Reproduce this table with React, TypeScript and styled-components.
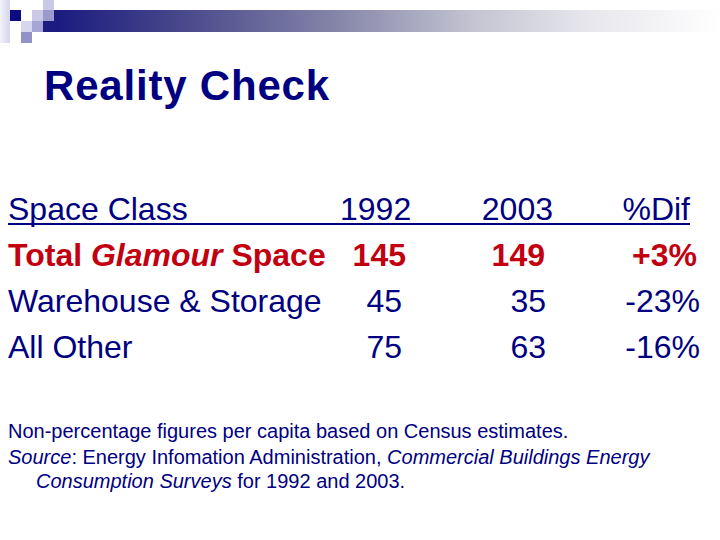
import React from "react";
import styled, { createGlobalStyle } from "styled-components";

const Global = createGlobalStyle`
  html, body { margin: 0; padding: 0; background: #ffffff; }
  body { font-family: "Liberation Sans", Arial, sans-serif; color: #000080; }
`;

const Slide = styled.div`
  width: 720px;
  height: 540px;
  overflow: hidden;
  display: flex;
  flex-direction: column;
`;

const Banner = styled.div`
  display: flex;
  align-items: flex-start;
  height: 44px;
`;

const Bar = styled.div`
  flex: 1;
  margin-top: 10px;
  height: 22px;
  background: linear-gradient(
    to right,
    #1a1a80 0%,
    #45458a 18%,
    #8484a8 42%,
    #c4c4d2 63%,
    #e6e6ec 80%,
    #ffffff 100%
  );
`;

const Title = styled.h1`
  margin: 18px 0 0 44px;
  font-size: 42px;
  line-height: 48px;
  font-weight: bold;
  letter-spacing: 0.8px;
  color: #000080;
`;

const Table = styled.div`
  margin: 85px 0 0 8px;
  display: flex;
  flex-direction: column;
`;

const Row = styled.div<{ $header?: boolean; $red?: boolean; $bold?: boolean }>`
  display: grid;
  grid-template-columns: ${(p) => (p.$header ? "332px 70px 143px 137px" : "332px 70px 143px 147px")};
  font-size: 32px;
  line-height: ${(p) => (p.$header ? "28px" : "46px")};
  color: ${(p) => (p.$red ? "#c20010" : "#000080")};
  font-weight: ${(p) => (p.$bold ? "bold" : "normal")};
  ${(p) => (p.$header ? "border-bottom: 2px solid #000080; margin-bottom: 7px; width: 682px;" : "")}
  white-space: nowrap;
`;

const Label = styled.div``;

const Num = styled.div<{ $pad?: number }>`
  text-align: right;
  padding-right: ${(p) => p.$pad ?? 0}px;
`;

const Footer = styled.div`
  margin: 49px 0 0 8px;
  font-size: 20px;
  line-height: 24px;
  color: #000080;
`;

const Note = styled.p`
  margin: 0;
`;

const Source = styled.p`
  margin: 2px 0 0;
  padding-left: 28px;
  text-indent: -28px;
`;

function Squares() {
  return (
    <svg width="54" height="44" viewBox="0 0 54 44" style={{ display: "block", flex: "none" }}>
      <defs>
        <linearGradient id="strip" x1="0" x2="1" y1="0" y2="0">
          <stop offset="0" stopColor="#f2f2fa" />
          <stop offset="1" stopColor="#d6d6ec" />
        </linearGradient>
      </defs>
      <rect x="0" y="0" width="10" height="43" fill="url(#strip)" />
      <rect x="10" y="10" width="11" height="11" fill="#0c0c80" />
      <rect x="32" y="10" width="11" height="11" fill="#cacae8" />
      <rect x="43" y="0" width="11" height="10" fill="#cacae6" />
      <rect x="43" y="10" width="11" height="11" fill="#9a9acc" />
      <rect x="43" y="21" width="11" height="11" fill="#1c1c80" />
      <rect x="21" y="21" width="11" height="11" fill="#d6d6ee" />
      <rect x="32" y="21" width="11" height="11" fill="#a6a6d6" />
      <rect x="21" y="32" width="11" height="11" fill="#9292c8" />
    </svg>
  );
}

export default function App() {
  return (
    <Slide>
      <Global />
      <Banner>
        <Squares />
        <Bar />
      </Banner>
      <Title>Reality Check</Title>
      <Table>
        <Row $header>
          <Label>Space Class</Label>
          <Num>1992</Num>
          <Num>2003</Num>
          <Num>%Dif</Num>
        </Row>
        <Row $red $bold>
          <Label>
            Total <i>Glamour</i> Space
          </Label>
          <Num $pad={4}>145</Num>
          <Num $pad={8}>149</Num>
          <Num $pad={3}>+3%</Num>
        </Row>
        <Row>
          <Label>Warehouse &amp; Storage</Label>
          <Num $pad={8}>45</Num>
          <Num $pad={7}>35</Num>
          <Num $pad={0}>-23%</Num>
        </Row>
        <Row>
          <Label>All Other</Label>
          <Num $pad={8}>75</Num>
          <Num $pad={7}>63</Num>
          <Num $pad={0}>-16%</Num>
        </Row>
      </Table>
      <Footer>
        <Note>Non-percentage figures per capita based on Census estimates.</Note>
        <Source>
          <i>Source</i>: Energy Infomation Administration, <i>Commercial Buildings Energy</i>
          <br />
          <i>Consumption Surveys</i> for 1992 and 2003.
        </Source>
      </Footer>
    </Slide>
  );
}
